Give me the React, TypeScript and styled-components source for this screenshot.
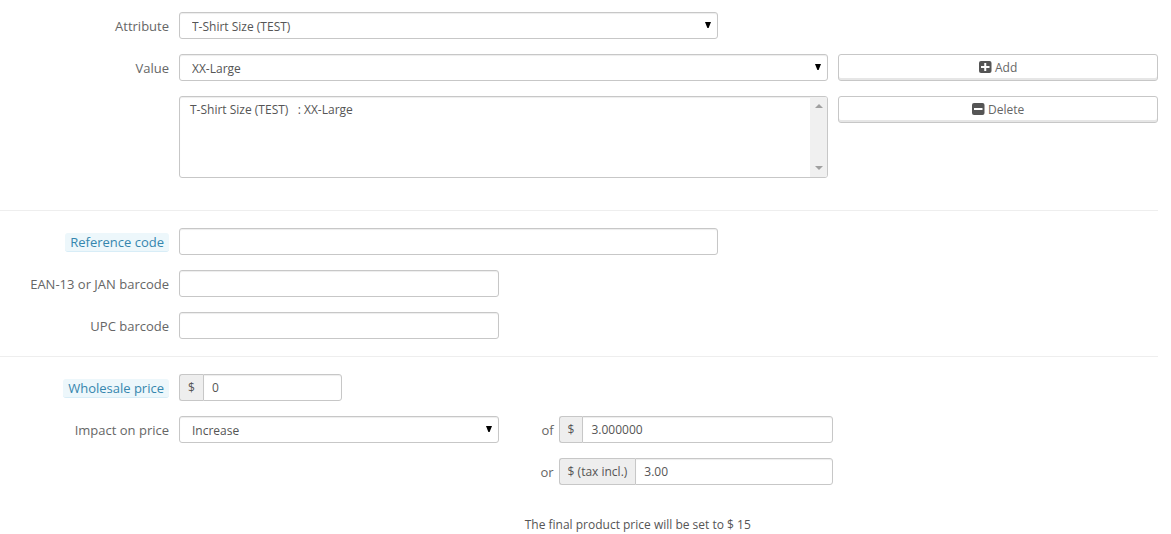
import React from "react";
import styled, { createGlobalStyle } from "styled-components";

const GlobalStyle = createGlobalStyle`
  *, *::before, *::after { box-sizing: border-box; }
  body {
    margin: 0;
    background: #fff;
    color: #555;
    font: 12px/17px "Open Sans", "Liberation Sans", sans-serif;
  }
  input, select, button { font: inherit; color: inherit; margin: 0; }
`;

const Form = styled.form`
  padding: 12px 8px 0 0;
`;

const Section = styled.div`
  display: flex;
  flex-direction: column;
  gap: 15px;
`;

const Divider = styled.hr<{ $before: number }>`
  margin: ${(p) => p.$before}px 5px 17px 0;
  border: 0;
  border-top: 1px solid #eee;
`;

const Row = styled.div`
  display: grid;
  grid-template-columns: 174px repeat(18, minmax(0, 1fr));
  align-items: start;
`;

const Cell = styled.div<{ $span: number; $flush?: boolean }>`
  grid-column: span ${(p) => p.$span};
  padding: ${(p) => (p.$flush ? "0" : "0 5px")};
`;

const Label = styled.label`
  height: 27px;
  padding: 1px 5px 0 0;
  font-size: 13px;
  line-height: 26px;
  color: #666;
  text-align: right;
  white-space: nowrap;
`;

const Hint = styled.span`
  display: inline-block;
  padding: 0 5px;
  border-bottom: 1px solid #d8edf7;
  border-radius: 3px;
  background: #edf7fb;
  color: #3586ae;
  line-height: 18px;
`;

const Input = styled.input`
  display: block;
  flex: 1;
  width: 100%;
  min-width: 0;
  height: 27px;
  padding: 0 8px;
  border: 1px solid #c7c7c7;
  border-radius: 3px;
  background: #fff;
  box-shadow: inset 0 1px 1px rgba(0, 0, 0, 0.075);
  outline: none;
`;

const Addon = styled.label`
  flex: none;
  height: 27px;
  padding: 0 8px;
  border: 1px solid #c7c7c7;
  border-right: 0;
  border-radius: 3px 0 0 3px;
  background: #eee;
  line-height: 25px;
`;

const Group = styled.div<{ $max?: number }>`
  display: flex;
  max-width: ${(p) => (p.$max ? p.$max + "px" : "none")};

  ${Input} {
    border-radius: 0 3px 3px 0;
  }
`;

const SelectWrap = styled.div`
  position: relative;

  svg {
    position: absolute;
    top: 10px;
    right: 7px;
    pointer-events: none;
  }
`;

const SelectBox = styled.select`
  display: block;
  appearance: none;
  width: 100%;
  height: 27px;
  padding: 2px 24px 0 12px;
  border: 1px solid #c7c7c7;
  border-radius: 3px;
  background: #fff;
  box-shadow: inset 0 1px 1px rgba(0, 0, 0, 0.075);
  outline: none;
`;

const ListFrame = styled.div`
  display: flex;
  height: 82px;
  border: 1px solid #c7c7c7;
  border-radius: 3px;
  overflow: hidden;
  box-shadow: inset 0 1px 1px rgba(0, 0, 0, 0.075);
`;

const ListBox = styled.select`
  flex: 1;
  min-width: 0;
  padding: 4px 8px;
  border: 0;
  background: transparent;
  outline: none;
  scrollbar-width: none;

  option {
    min-height: 17px;
    padding: 0 2px;
    white-space: pre;
  }
`;

const ScrollTrack = styled.div`
  display: flex;
  flex-direction: column;
  justify-content: space-between;
  align-items: center;
  width: 17px;
  padding: 7px 0;
  background: #f0f0f0;
`;

const Button = styled.button`
  display: flex;
  justify-content: center;
  align-items: center;
  gap: 3px;
  width: 100%;
  height: 27px;
  padding: 0 8px;
  border: 1px solid #c7c7c7;
  border-radius: 3px;
  background: #fff;
  box-shadow: inset 0 -2px 0 #e6e6e6;
  color: #666;
  cursor: pointer;

  svg {
    margin-bottom: 2px;
  }
`;

const FinalPrice = styled.p`
  grid-column: 8 / -1;
  margin: 16px 0 0;
  padding: 0 21px;
  line-height: 17px;
`;

const Spacer = styled.div<{ $span: number }>`
  grid-column: span ${(p) => p.$span};
`;

function Select({ id, value }: { id: string; value: string }) {
  return (
    <SelectWrap>
      <SelectBox id={id} defaultValue={value}>
        <option>{value}</option>
      </SelectBox>
      <svg width="6" height="6" viewBox="0 0 6 6" aria-hidden="true">
        <path d="M0 0H6L3.6 6H2.4Z" fill="#000" />
      </svg>
    </SelectWrap>
  );
}

function SquareIcon({ plus }: { plus?: boolean }) {
  return (
    <svg width="13" height="12" viewBox="0 0 13 12" aria-hidden="true">
      <rect width="12.5" height="12" rx="2" fill="#555" />
      <path d={plus ? "M2 6H10.5M6.25 2V10" : "M2 6H10.5"} stroke="#fff" strokeWidth="2" />
    </svg>
  );
}

function ScrollArrow({ down }: { down?: boolean }) {
  return (
    <svg width="8" height="4" viewBox="0 0 8 4" aria-hidden="true">
      <path d={down ? "M0 0H8L4 4Z" : "M0 4H8L4 0Z"} fill="#a0a0a0" />
    </svg>
  );
}

export default function App() {
  return (
    <>
      <GlobalStyle />
      <Form onSubmit={(e) => e.preventDefault()}>
        <Section>
          <Row>
            <Label htmlFor="attribute">Attribute</Label>
            <Cell $span={10}>
              <Select id="attribute" value="T-Shirt Size (TEST)" />
            </Cell>
          </Row>
          <Row>
            <Label htmlFor="value">Value</Label>
            <Cell $span={12}>
              <Select id="value" value="XX-Large" />
            </Cell>
            <Cell $span={6}>
              <Button type="button">
                <SquareIcon plus />
                Add
              </Button>
            </Cell>
          </Row>
          <Row>
            <Spacer $span={1} />
            <Cell $span={12}>
              <ListFrame>
                <ListBox multiple size={4} aria-label="Combination">
                  <option>{"T-Shirt Size (TEST)\u00a0\u00a0 : XX-Large"}</option>
                </ListBox>
                <ScrollTrack aria-hidden="true">
                  <ScrollArrow />
                  <ScrollArrow down />
                </ScrollTrack>
              </ListFrame>
            </Cell>
            <Cell $span={6}>
              <Button type="button">
                <SquareIcon />
                Delete
              </Button>
            </Cell>
          </Row>
        </Section>

        <Divider $before={32} />

        <Section>
          <Row>
            <Label htmlFor="reference">
              <Hint>Reference code</Hint>
            </Label>
            <Cell $span={10}>
              <Input id="reference" type="text" />
            </Cell>
          </Row>
          <Row>
            <Label htmlFor="ean13">EAN-13 or JAN barcode</Label>
            <Cell $span={6}>
              <Input id="ean13" type="text" />
            </Cell>
          </Row>
          <Row>
            <Label htmlFor="upc">UPC barcode</Label>
            <Cell $span={6}>
              <Input id="upc" type="text" />
            </Cell>
          </Row>
        </Section>

        <Divider $before={17} />

        <Section>
          <Row>
            <Label htmlFor="wholesale">
              <Hint>Wholesale price</Hint>
            </Label>
            <Cell $span={6}>
              <Group $max={163}>
                <Addon htmlFor="wholesale">$</Addon>
                <Input id="wholesale" type="text" defaultValue="0" />
              </Group>
            </Cell>
          </Row>
          <Row>
            <Label htmlFor="impact">Impact on price</Label>
            <Cell $span={6}>
              <Select id="impact" value="Increase" />
            </Cell>
            <Label htmlFor="amount">of</Label>
            <Cell $span={5} $flush>
              <Group>
                <Addon htmlFor="amount">$</Addon>
                <Input id="amount" type="text" defaultValue="3.000000" />
              </Group>
            </Cell>
          </Row>
          <Row>
            <Spacer $span={7} />
            <Label htmlFor="amount-tax">or</Label>
            <Cell $span={5} $flush>
              <Group>
                <Addon htmlFor="amount-tax">$ (tax incl.)</Addon>
                <Input id="amount-tax" type="text" defaultValue="3.00" />
              </Group>
            </Cell>
          </Row>
          <Row>
            <FinalPrice>The final product price will be set to $ 15</FinalPrice>
          </Row>
        </Section>
      </Form>
    </>
  );
}
